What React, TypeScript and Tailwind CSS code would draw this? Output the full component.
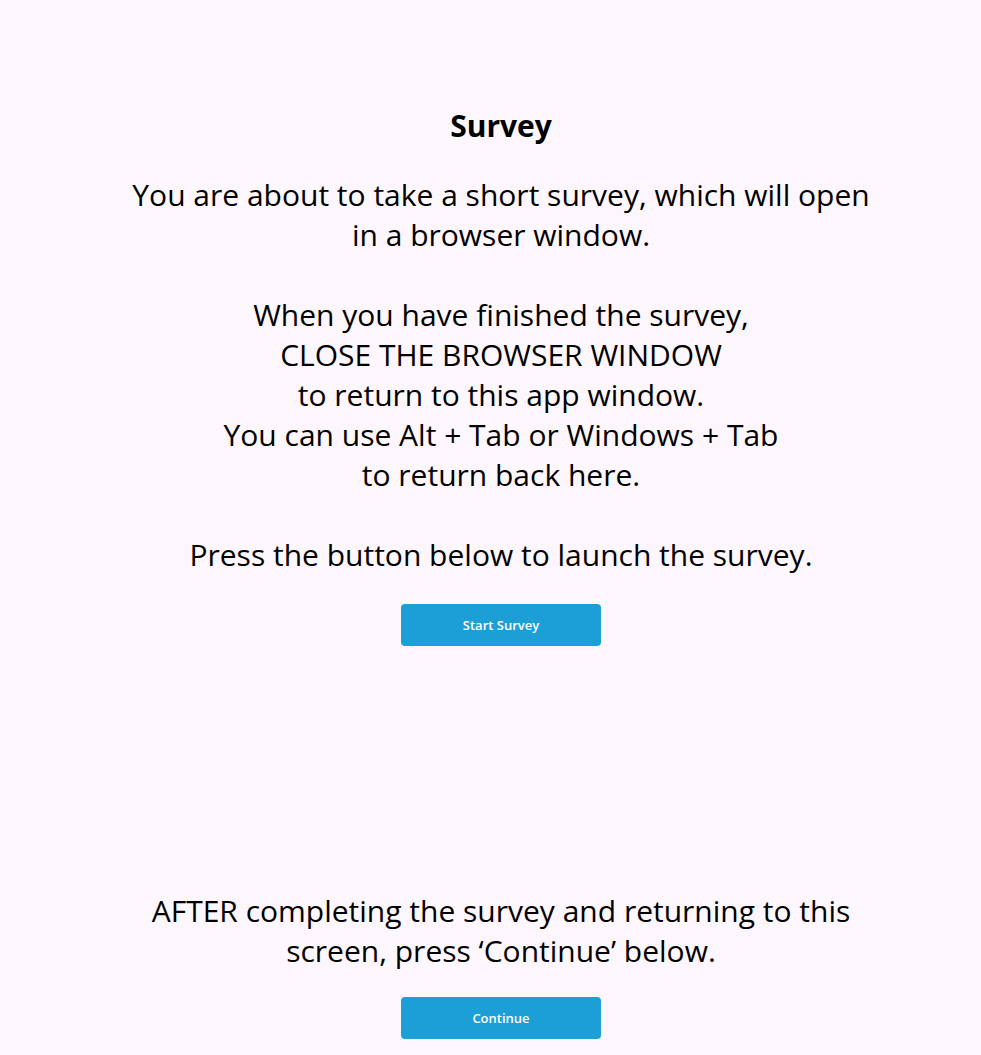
export default function App() {
  return (
    <div
      className="flex min-h-[1055px] w-full flex-col items-center bg-[#fdf7fd] pl-[21px] text-black"
      style={{ fontFamily: '"Open Sans", "Noto Sans", sans-serif' }}
    >
      <div className="flex flex-col items-center pt-[106px]">
        <h1 className="text-[30px] font-bold leading-[40px]">Survey</h1>
        <p className="mt-[29px] text-center text-[30px] leading-[40px]">
          You are about to take a short survey, which will open
          <br />
          in a browser window.
          <br />
          <br />
          When you have finished the survey,
          <br />
          CLOSE THE BROWSER WINDOW
          <br />
          to return to this app window.
          <br />
          You can use Alt + Tab or Windows + Tab
          <br />
          to return back here.
          <br />
          <br />
          Press the button below to launch the survey.
        </p>
        <button
          type="button"
          className="mt-[29px] h-[42px] w-[200px] rounded-[4px] bg-[#1c9fd6] pt-[2px] text-[13px] font-semibold text-white"
        >
          Start Survey
        </button>
      </div>

      <div className="mt-auto flex flex-col items-center pb-[16px]">
        <p className="text-center text-[30px] leading-[40px]">
          AFTER completing the survey and returning to this
          <br />
          screen, press ‘Continue’ below.
        </p>
        <button
          type="button"
          className="mt-[26px] h-[42px] w-[200px] rounded-[4px] bg-[#1c9fd6] pt-[2px] text-[13px] font-semibold text-white"
        >
          Continue
        </button>
      </div>
    </div>
  );
}
